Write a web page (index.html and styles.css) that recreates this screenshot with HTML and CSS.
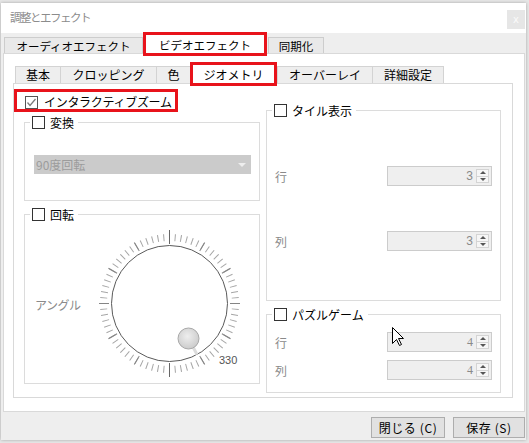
FILE: index.html
```html
<!DOCTYPE html>
<html lang="ja">
<head>
<meta charset="utf-8">
<title>調整とエフェクト</title>
<link rel="stylesheet" href="styles.css">
</head>
<body>
<div class="window">
  <div class="titlebar">
    <span class="title">調整とエフェクト</span>
    <span class="close">x</span>
  </div>
  <div class="tabstrip">
    <div class="tab t-audio">オーディオエフェクト</div>
    <div class="tab sel t-video hl">ビデオエフェクト</div>
    <div class="tab t-sync">同期化</div>
  </div>
  <div class="panel">
    <div class="subtabs">
      <div class="stab s1">基本</div>
      <div class="stab s2">クロッピング</div>
      <div class="stab s3">色</div>
      <div class="stab sel s4 hl">ジオメトリ</div>
      <div class="stab s5">オーバーレイ</div>
      <div class="stab s6">詳細設定</div>
    </div>
    <div class="subpanel">
      <div class="col">
        <div class="zoomcheck hl">
          <span class="cb checked"><svg width="11" height="11" viewBox="0 0 11 11"><polyline points="1.5,5.5 4,8.5 9.5,2" fill="none" stroke="#7a7a7a" stroke-width="1.3"/></svg></span>
          <span>インタラクティブズーム</span>
        </div>
        <div class="group g-convert">
          <div class="legend"><span class="cb"></span><span>変換</span></div>
          <div class="select"><span>90度回転</span><span class="arrow"></span></div>
        </div>
        <div class="group g-rotate">
          <div class="legend"><span class="cb"></span><span>回転</span></div>
          <div class="dialrow">
            <span class="dim anglelabel">アングル</span>
            <svg class="dial" width="170" height="150" viewBox="0 0 170 150">
              <defs>
                <radialGradient id="kg" cx="45%" cy="40%" r="65%">
                  <stop offset="0" stop-color="#eeeeee"/>
                  <stop offset="1" stop-color="#c9c9c9"/>
                </radialGradient>
              </defs>
              <circle cx="85.5" cy="75.5" r="66" fill="none" stroke="#a6a6a6" stroke-width="7" pathLength="360" stroke-dasharray="0.87 4.13" stroke-dashoffset="0.435"/>
              <circle cx="85.5" cy="75.5" r="65.5" fill="none" stroke="#858585" stroke-width="10" pathLength="360" stroke-dasharray="0.9 29.1" stroke-dashoffset="0.45"/>
              <line x1="85.5" y1="2" x2="85.5" y2="16" stroke="#666"/>
              <line x1="85.5" y1="135" x2="85.5" y2="149" stroke="#666"/>
              <circle cx="85.5" cy="75.5" r="58" fill="#fff" stroke="#5a5a5a"/>
              <line x1="108.5" y1="118" x2="113" y2="126.5" stroke="#dcdcdc" stroke-width="3"/>
              <circle cx="104.5" cy="110.5" r="10.5" fill="url(#kg)" stroke="#a8a8a8"/>
              <text x="135" y="136" class="dialnum">330</text>
            </svg>
          </div>
        </div>
      </div>
      <div class="col">
        <div class="group g-tile">
          <div class="legend"><span class="cb"></span><span>タイル表示</span></div>
          <div class="row r1">
            <span class="dim">行</span>
            <div class="spin"><span class="val">3</span><span class="spinbtn"><span class="up"></span><span class="down"></span></span></div>
          </div>
          <div class="row r2">
            <span class="dim">列</span>
            <div class="spin"><span class="val">3</span><span class="spinbtn"><span class="up"></span><span class="down"></span></span></div>
          </div>
        </div>
        <div class="group g-puzzle">
          <div class="legend"><span class="cb"></span><span>パズルゲーム</span></div>
          <div class="row r3">
            <span class="dim">行</span>
            <div class="spin"><span class="val serif">4</span><span class="spinbtn"><span class="up"></span><span class="down"></span></span></div>
          </div>
          <div class="row r4">
            <span class="dim">列</span>
            <div class="spin"><span class="val serif">4</span><span class="spinbtn"><span class="up"></span><span class="down"></span></span></div>
          </div>
        </div>
      </div>
    </div>
  </div>
  <div class="footer">
    <button class="btn b-close">閉じる (C)</button>
    <button class="btn b-save">保存 (S)</button>
  </div>
</div>
<svg class="cursor" width="13" height="20" viewBox="0 0 13 20">
  <path d="M0.5,0.5 L0.5,16.5 L4.5,12.5 L7.5,18.5 L9.5,17.5 L6.5,11.5 L11.5,11.5 Z" fill="#fff" stroke="#000" stroke-linejoin="miter"/>
</svg>
</body>
</html>
```

FILE: styles.css
```css
* { box-sizing: border-box; }
html, body { margin: 0; padding: 0; }
body {
  width: 529px;
  height: 443px;
  overflow: hidden;
  position: relative;
  background: #e6e6e6;
  font-family: "Noto Sans CJK JP", "Noto Sans", sans-serif;
  font-size: 12px;
  color: #000;
}
.window {
  margin: 3px 0 0 1px;
  width: 525px;
  height: 437px;
  background: #eeeeee;
  display: flex;
  flex-direction: column;
  box-shadow: 0 0 3px rgba(0,0,0,0.28);
}
.titlebar {
  height: 30px;
  flex: none;
  background: #fff;
  display: flex;
  justify-content: space-between;
  align-items: flex-start;
}
.title {
  margin: 6px 0 0 9px;
  color: #8c8c8c;
  font-size: 11.5px;
  line-height: 16px;
  letter-spacing: -1.5px;
}
.close {
  margin: 7px 1px 0 0;
  width: 18px;
  height: 19px;
  background: #e6e6e6;
  color: #fafafa;
  font-family: "DejaVu Sans", sans-serif;
  font-size: 10px;
  display: flex;
  align-items: center;
  justify-content: center;
}
.tabstrip {
  height: 20px;
  flex: none;
  display: flex;
  align-items: flex-end;
  padding-left: 3px;
}
.tab {
  height: 16px;
  border: 1px solid #cdcdcd;
  border-bottom: none;
  background: #e9e9e9;
  display: flex;
  align-items: center;
  justify-content: center;
  font-size: 11.5px;
  line-height: 14px;
  white-space: nowrap;
}
.tab.sel {
  height: 18px;
  background: #fff;
  border-color: #fff;
  margin: 0 4px 0 3px;
  position: relative;
  z-index: 1;
}
.t-audio { width: 139px; }
.t-video { width: 118px; }
.t-sync { width: 56px; }
.hl { outline: 3px solid #e8131b; }
.panel {
  height: 359px;
  flex: none;
  margin: 0 1px 0 2px;
  border: 1px solid #d9d9d9;
  background: #fff;
  padding: 11px 11px 13px 9px;
  display: flex;
  flex-direction: column;
}
.subtabs {
  height: 18px;
  flex: none;
  display: flex;
  align-items: flex-end;
  padding-left: 2px;
}
.stab {
  height: 17px;
  border: 1px solid #d3d3d3;
  border-bottom: none;
  margin-right: -1px;
  background: #eeeeee;
  display: flex;
  align-items: center;
  justify-content: center;
  line-height: 14px;
  white-space: nowrap;
}
.stab.sel {
  height: 18px;
  background: #fff;
  border-color: #fff;
  margin: 0 3px 0 3px;
  position: relative;
  z-index: 1;
}
.s1 { width: 46px; }
.s2 { width: 97px; }
.s3 { width: 35px; }
.s4 { width: 81px; }
.s5 { width: 96px; }
.s6 { width: 72px; }
.subpanel {
  flex: 1;
  border: 1px solid #d9d9d9;
  display: grid;
  grid-template-columns: 236px 235px;
  column-gap: 6px;
  align-items: start;
  padding: 8px 11px 0 10px;
}
.col { display: flex; flex-direction: column; }
.cb {
  width: 13px;
  height: 13px;
  flex: none;
  border: 1px solid #333;
  background: #fff;
  display: flex;
  align-items: center;
  justify-content: center;
}
.cb.checked { border-color: #555; }
.zoomcheck {
  margin-left: -7px;
  width: 158px;
  height: 17px;
  padding: 3px 0 0 8px;
  display: flex;
  align-items: center;
  gap: 6px;
  line-height: 14px;
  letter-spacing: -0.3px;
}
.group {
  border: 1px solid #dcdcdc;
  display: flex;
  flex-direction: column;
  flex: none;
}
.legend {
  align-self: flex-start;
  margin: -7px 0 0 5px;
  padding: 0 4px 0 2px;
  height: 13px;
  background: #fff;
  display: flex;
  align-items: center;
  gap: 5px;
  line-height: 13px;
}
.g-convert { margin-top: 13px; height: 79px; }
.g-rotate { margin-top: 13px; height: 170px; }
.g-tile { margin-top: 18px; height: 191px; }
.g-puzzle { margin-top: 13px; height: 79px; }
.select {
  margin: 26px 0 0 9px;
  width: 217px;
  height: 19px;
  background: #cbcbcb;
  color: #9c9c9c;
  display: flex;
  align-items: center;
  justify-content: space-between;
  padding: 0 5px 0 2px;
  line-height: 14px;
}
.arrow {
  width: 0;
  height: 0;
  border-left: 4px solid transparent;
  border-right: 4px solid transparent;
  border-top: 4px solid #eeeeee;
  margin-right: 0;
}
.dim { color: #8a8a8a; }
.dialrow {
  margin-top: 7px;
  height: 150px;
  display: flex;
  align-items: center;
}
.anglelabel {
  width: 59px;
  padding-left: 10px;
  padding-top: 2px;
  flex: none;
  letter-spacing: -0.5px;
}
.dial { display: block; flex: none; }
.dialnum {
  font-family: "Liberation Sans", Arial, sans-serif;
  font-size: 11px;
  fill: #555;
}
.row {
  height: 20px;
  display: flex;
  align-items: center;
  justify-content: space-between;
  padding: 0 8px;
}
.r1 { margin-top: 49px; }
.r2 { margin-top: 45px; }
.r3 { margin-top: 11px; }
.r4 { margin-top: 8px; }
.spin {
  width: 105px;
  height: 20px;
  border: 1px solid #cccccc;
  background: #efefef;
  display: flex;
  align-items: center;
  justify-content: flex-end;
  padding-right: 2px;
}
.val {
  color: #8a8a8a;
  margin-right: 3px;
  font-family: "Liberation Sans", Arial, sans-serif;
  font-size: 12px;
}
.val.serif { font-family: "Liberation Serif", serif; }
.spinbtn {
  width: 13px;
  height: 14px;
  border: 1px solid #d4d4d4;
  background: #f6f6f6;
  display: flex;
  flex-direction: column;
}
.spinbtn .up, .spinbtn .down {
  flex: 1;
  display: flex;
  align-items: center;
  justify-content: center;
}
.spinbtn .down { border-top: 1px solid #d4d4d4; }
.spinbtn .up::before {
  content: "";
  border-left: 3px solid transparent;
  border-right: 3px solid transparent;
  border-bottom: 3px solid #555;
}
.spinbtn .down::before {
  content: "";
  border-left: 3px solid transparent;
  border-right: 3px solid transparent;
  border-top: 3px solid #555;
}
.footer {
  height: 28px;
  flex: none;
  display: flex;
  justify-content: flex-end;
  align-items: flex-start;
  gap: 8px;
  padding: 5px 1px 0 0;
}
.btn {
  height: 21px;
  margin: 0;
  border: 1px solid #adadad;
  background: #e1e1e1;
  font-family: "Noto Sans CJK JP", "Noto Sans", sans-serif;
  font-size: 12px;
  letter-spacing: 0.6px;
  color: #000;
  padding: 0;
  display: flex;
  align-items: center;
  justify-content: center;
  line-height: 14px;
}
.b-close { width: 74px; }
.b-save { width: 72px; }
.cursor {
  position: absolute;
  left: 392px;
  top: 327px;
}
```
